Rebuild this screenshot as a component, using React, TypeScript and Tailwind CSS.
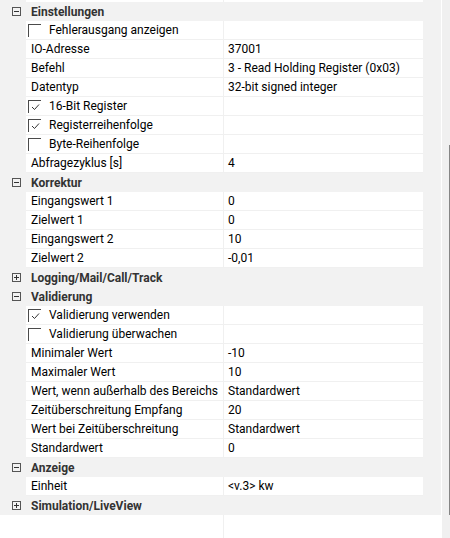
import React from "react";

type Row =
  | { kind: "group"; label: string; open: boolean }
  | { kind: "prop"; label: string; value?: string }
  | { kind: "check"; label: string; checked: boolean };

const rows: Row[] = [
  { kind: "group", label: "Einstellungen", open: true },
  { kind: "check", label: "Fehlerausgang anzeigen", checked: false },
  { kind: "prop", label: "IO-Adresse", value: "37001" },
  { kind: "prop", label: "Befehl", value: "3 - Read Holding Register (0x03)" },
  { kind: "prop", label: "Datentyp", value: "32-bit signed integer" },
  { kind: "check", label: "16-Bit Register", checked: true },
  { kind: "check", label: "Registerreihenfolge", checked: true },
  { kind: "check", label: "Byte-Reihenfolge", checked: false },
  { kind: "prop", label: "Abfragezyklus [s]", value: "4" },
  { kind: "group", label: "Korrektur", open: true },
  { kind: "prop", label: "Eingangswert 1", value: "0" },
  { kind: "prop", label: "Zielwert 1", value: "0" },
  { kind: "prop", label: "Eingangswert 2", value: "10" },
  { kind: "prop", label: "Zielwert 2", value: "-0,01" },
  { kind: "group", label: "Logging/Mail/Call/Track", open: false },
  { kind: "group", label: "Validierung", open: true },
  { kind: "check", label: "Validierung verwenden", checked: true },
  { kind: "check", label: "Validierung überwachen", checked: false },
  { kind: "prop", label: "Minimaler Wert", value: "-10" },
  { kind: "prop", label: "Maximaler Wert", value: "10" },
  { kind: "prop", label: "Wert, wenn außerhalb des Bereichs", value: "Standardwert" },
  { kind: "prop", label: "Zeitüberschreitung Empfang", value: "20" },
  { kind: "prop", label: "Wert bei Zeitüberschreitung", value: "Standardwert" },
  { kind: "prop", label: "Standardwert", value: "0" },
  { kind: "group", label: "Anzeige", open: true },
  { kind: "prop", label: "Einheit", value: "<v.3> kw" },
  { kind: "group", label: "Simulation/LiveView", open: false },
];

const ExpandBox = ({ open }: { open: boolean }) => (
  <svg width="9" height="9" viewBox="0 0 9 9" className="block">
    <rect x="0.5" y="0.5" width="8" height="8" fill="none" stroke="#555" />
    <line x1="2" y1="4.5" x2="7" y2="4.5" stroke="#333" />
    {!open && <line x1="4.5" y1="2" x2="4.5" y2="7" stroke="#333" />}
  </svg>
);

const CheckBox = ({ checked }: { checked: boolean }) => (
  <div className="w-[13px] h-[13px] border-t border-l border-[#4a4a4a] relative shrink-0">
    {checked && (
      <svg width="12" height="12" viewBox="0 0 12 12" className="absolute left-0 top-0">
        <polyline points="3,6 5.5,8.5 10,3.5" fill="none" stroke="#333" strokeWidth="1" />
      </svg>
    )}
  </div>
);

const PropRow = ({ children, value }: { children: React.ReactNode; value?: string }) => (
  <div className="flex h-[19px]">
    <div className="w-[26px] shrink-0" />
    <div className="flex flex-1 bg-white border-b border-[#f0f0f0]">
      <div className="w-[197px] shrink-0 flex items-center pl-[5px] whitespace-nowrap overflow-hidden">
        {children}
      </div>
      <div className="w-[1px] bg-[#f0f0f0]" />
      <div className="flex-1 flex items-center pl-[4px] whitespace-nowrap">{value}</div>
    </div>
  </div>
);

export default function App() {
  return (
    <div
      className="w-[450px] h-[538px] bg-white flex overflow-hidden text-[12px] text-black"
      style={{ fontFamily: "Roboto, 'Noto Sans', sans-serif" }}
    >
      <div className="w-[441px] flex flex-col">
        <div className="bg-[#f2f2f2] pr-[18px]">
          {/* tail of previous row */}
          <div className="flex h-[2px]">
            <div className="w-[26px]" />
            <div className="w-[197px] bg-white" />
            <div className="w-[1px] bg-[#f0f0f0]" />
            <div className="flex-1 bg-white" />
          </div>
          {rows.map((r, i) => {
            if (r.kind === "group") {
              return (
                <div key={i} className="flex h-[19px] items-center">
                  <div className="w-[26px] shrink-0 flex pl-[12px]">
                    <ExpandBox open={r.open} />
                  </div>
                  <div className="pl-[5px] font-bold text-[#333]">{r.label}</div>
                </div>
              );
            }
            if (r.kind === "check") {
              return (
                <PropRow key={i}>
                  <div className="flex items-center gap-[8px] -ml-[3px]">
                    <CheckBox checked={r.checked} />
                    <span>{r.label}</span>
                  </div>
                </PropRow>
              );
            }
            return (
              <PropRow key={i} value={r.value}>
                {r.label}
              </PropRow>
            );
          })}
        </div>
        <div className="flex-1 flex">
          <div className="w-[223px]" />
          <div className="w-[1px] bg-[#f0f0f0]" />
        </div>
      </div>
      <div className="w-[8px] ml-[1px] bg-[#f0f0f0] flex flex-col">
        <div className="h-[145px]" />
        <div className="h-[370px] ml-[7px] w-[1px] bg-[#868686]" />
      </div>
    </div>
  );
}
